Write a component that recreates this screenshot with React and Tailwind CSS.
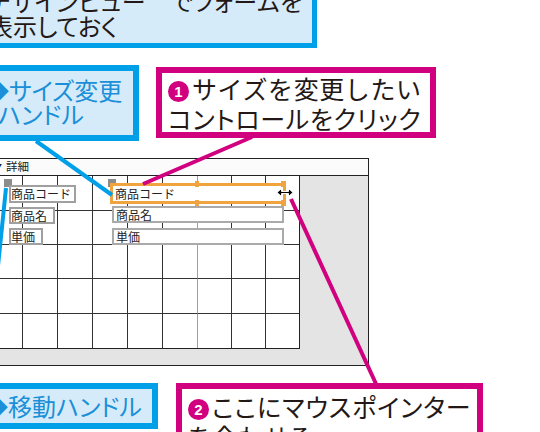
import React from "react";

const colW = ["w-[43px]", "w-[35px]", "w-[35px]", "w-[35px]", "w-[35px]", "w-[35px]", "w-[34px]", "w-[34px]", "w-[33px]"];
const rowH = ["h-[35px]", "h-[34px]", "h-[34px]", "h-[35px]", "h-[34px]"];

function Grid() {
  return (
    <div className="flex flex-col">
      {rowH.map((h, r) => (
        <div key={r} className={`flex ${h}`}>
          {colW.map((w, c) => (
            <div
              key={c}
              className={`${w} h-full shrink-0 ${c < 8 ? "border-r" : ""} ${r < 4 ? "border-b" : ""} ${c === 5 ? "border-r-[#a0a0a0]" : "border-r-[#333]"} border-b-[#333]`}
            />
          ))}
        </div>
      ))}
    </div>
  );
}

function Num({ n }) {
  return (
    <span className="inline-flex items-center justify-center w-[21px] h-[21px] rounded-full bg-[#d0007f] text-white text-[15px] font-bold font-['Liberation_Sans',sans-serif] leading-none tracking-normal relative top-[-2px] mr-[3px]">
      {n}
    </span>
  );
}

const labelCls = "border-2 border-[#a0a0a0] bg-white text-[12px] leading-[13px] text-[#222] h-[17px]";
const boxCls = "border-2 border-[#aaaaaa] bg-white text-[12px] leading-[13px] text-[#222] h-[17px] w-[172px] pl-[2px]";

function Controls() {
  return (
    <div className="flex flex-col">
      <div className="flex items-center h-[21px]">
        <div className="w-[101px] shrink-0">
          <div className={`${labelCls} w-[67px] h-[18px] leading-[14px]`}>商品コード</div>
        </div>
        <div className="relative w-[176px] h-[21px] border-[3px] border-[#f0a43f] bg-white text-[12px] leading-[15px] text-[#222] pl-[2px]">
          商品コード
          <span className="absolute left-[82px] top-[-5px] w-[4px] h-[6px] bg-[#f0a43f]" />
          <span className="absolute left-[82px] bottom-[-5px] w-[4px] h-[6px] bg-[#f0a43f]" />
          <span className="absolute right-[-3px] top-[-5px] w-[5px] h-[6px] bg-[#f0a43f]" />
          <span className="absolute right-[-3px] bottom-[-5px] w-[5px] h-[6px] bg-[#f0a43f]" />
          <svg className="absolute right-[-11px] top-[1px]" width="18" height="11" viewBox="0 0 18 11">
            <path d="M1 5.5 L5.5 1.5 L5.5 4.5 L12.5 4.5 L12.5 1.5 L17 5.5 L12.5 9.5 L12.5 6.5 L5.5 6.5 L5.5 9.5 Z" fill="#000" stroke="#fff" strokeWidth="1" />
          </svg>
        </div>
      </div>
      <div className="flex items-start mt-[2px]">
        <div className="w-[103px] shrink-0 pt-[1px]">
          <div className={`${labelCls} w-[46px]`}>商品名</div>
        </div>
        <div className={boxCls}>商品名</div>
      </div>
      <div className="flex items-start mt-[4px]">
        <div className="w-[103px] shrink-0">
          <div className={`${labelCls} w-[34px]`}>単価</div>
        </div>
        <div className={boxCls}>単価</div>
      </div>
    </div>
  );
}

const callout = "absolute whitespace-nowrap";
const palt = "[font-feature-settings:'palt']";

export default function App() {
  return (
    <div className="relative w-[540px] h-[432px] overflow-hidden bg-white font-['Noto_Sans_CJK_JP','Noto_Sans',sans-serif]">
      {/* design surface */}
      <div className="pt-[158px]">
        <div className="ml-[-20px] w-[389px]">
          <div className="h-[18px] border-y border-r border-[#222] bg-[#fbfbfb] flex items-center pl-[14px] text-[11.5px] text-[#222] leading-none">
            <span className="text-[8px] mr-[4px]">▼</span>
            <span>詳細</span>
          </div>
          <div className="h-[190px] bg-[#e4e4e4] border-r border-b border-[#222]">
            <div className="relative w-[320px] h-[173px] bg-white border-r border-b border-[#222]">
              <Grid />
              {/* move handles */}
              <div className="absolute left-[24px] top-[3px] w-[8px] h-[8px] bg-[#8c8c8c]" />
              <div className="absolute left-[128px] top-[3px] w-[8px] h-[8px] bg-[#8c8c8c]" />
              <div className="absolute left-[29px] top-[7px]">
                <Controls />
              </div>
            </div>
          </div>
        </div>
      </div>

      {/* pointer lines */}
      <svg className="absolute left-0 top-0 pointer-events-none" width="540" height="432" viewBox="0 0 540 432">
        <line x1="36" y1="141" x2="112" y2="195" stroke="#00a0e9" strokeWidth="4" />
        <line x1="6" y1="188" x2="-14" y2="383" stroke="#00a0e9" strokeWidth="4" />
        <line x1="252" y1="137" x2="143" y2="184" stroke="#d0007f" strokeWidth="4" />
        <line x1="291" y1="199" x2="377" y2="386" stroke="#d0007f" strokeWidth="4" />
      </svg>

      {/* top blue callout */}
      <div className={`${callout} ${palt} left-[-10px] top-[-30px] w-[327px] h-[78px] border-[5px] border-[#00a0e9] bg-[#d5ebf9] pt-[13px] text-[24px] leading-[25px] text-[#231815]`}>
        <div className="ml-[-7px] tracking-[0.6px]">デザインビュー　でフォームを</div>
        <div className="ml-[-6px]">表示しておく</div>
      </div>

      {/* size handle callout */}
      <div className={`${callout} ${palt} left-[-10px] top-[65px] w-[149px] h-[76px] border-[6px] border-[#00a0e9] bg-[#d5ebf9] pt-[7px] text-[24px] leading-[24px] text-[#1b8fd8]`}>
        <div className="ml-[-11px]">◆サイズ変更</div>
        <div className="ml-[2px]">ハンドル</div>
      </div>

      {/* magenta callout 1 */}
      <div className={`${callout} left-[156px] top-[67px] w-[280px] h-[71px] border-[6px] border-[#d0007f] bg-white pt-[1px] pl-[6px] text-[25px] leading-[28px] text-[#231815]`}>
        <div className="tracking-[0.6px]"><Num n="1" />サイズを変更したい</div>
        <div className={`${palt} tracking-[0.7px]`}>コントロールをクリック</div>
      </div>

      {/* move handle callout */}
      <div className={`${callout} ${palt} left-[-10px] top-[383px] w-[168px] h-[46px] border-[6px] border-[#00a0e9] bg-[#d5ebf9] pt-[2px] text-[24px] leading-[30px] text-[#1b8fd8]`}>
        <div className="ml-[-12px]">◆移動ハンドル</div>
      </div>

      {/* magenta callout 2 */}
      <div className={`${callout} ${palt} left-[176px] top-[383px] w-[307px] h-[80px] border-[6px] border-[#d0007f] bg-white pt-[3px] pl-[6px] text-[25px] leading-[28px] text-[#231815]`}>
        <div className="tracking-[0.9px]"><Num n="2" />ここにマウスポインター</div>
        <div className="tracking-[0.9px]">を合わせる</div>
      </div>
    </div>
  );
}
